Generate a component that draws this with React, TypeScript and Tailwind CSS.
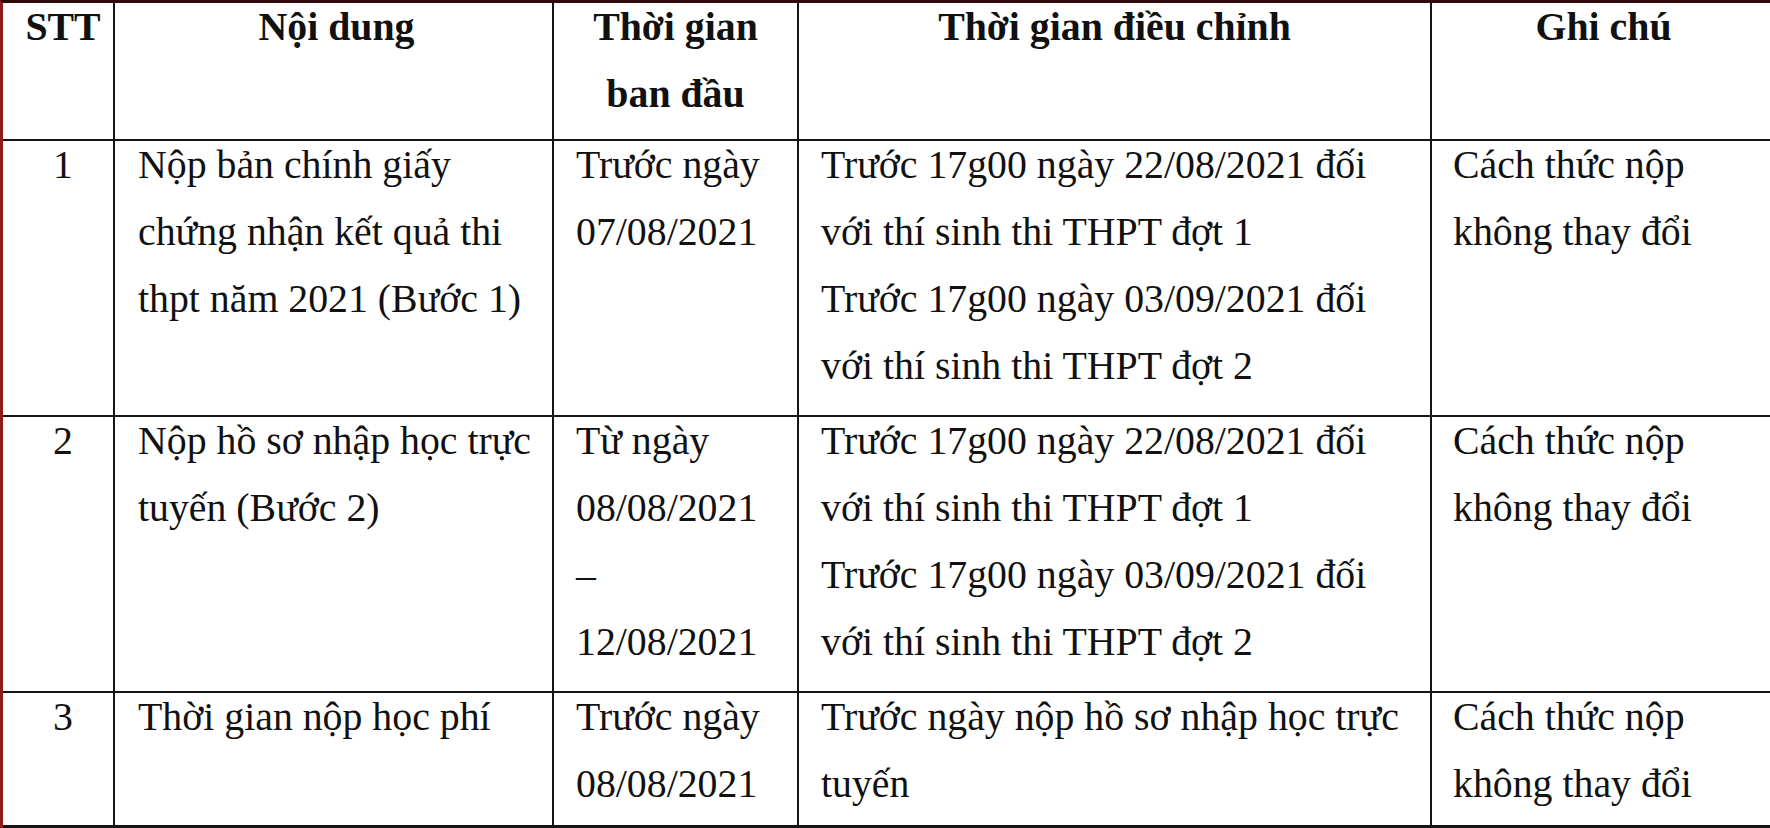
const cols = "grid grid-cols-[110px_439px_245px_633px_345px]";

type Row = {
  stt: string;
  content: string[];
  start: string[];
  adjusted: string[];
  note: string[];
  height: string;
};

const rows: Row[] = [
  {
    stt: "1",
    content: ["Nộp bản chính giấy", "chứng nhận kết quả thi", "thpt năm 2021 (Bước 1)"],
    start: ["Trước ngày", "07/08/2021"],
    adjusted: [
      "Trước 17g00 ngày 22/08/2021 đối",
      "với thí sinh thi THPT đợt 1",
      "Trước 17g00 ngày 03/09/2021 đối",
      "với thí sinh thi THPT đợt 2",
    ],
    note: ["Cách thức nộp", "không thay đổi"],
    height: "h-[276px]",
  },
  {
    stt: "2",
    content: ["Nộp hồ sơ nhập học trực", "tuyến (Bước 2)"],
    start: ["Từ ngày", "08/08/2021", "–", "12/08/2021"],
    adjusted: [
      "Trước 17g00 ngày 22/08/2021 đối",
      "với thí sinh thi THPT đợt 1",
      "Trước 17g00 ngày 03/09/2021 đối",
      "với thí sinh thi THPT đợt 2",
    ],
    note: ["Cách thức nộp", "không thay đổi"],
    height: "h-[276px]",
  },
  {
    stt: "3",
    content: ["Thời gian nộp học phí"],
    start: ["Trước ngày", "08/08/2021"],
    adjusted: ["Trước ngày nộp hồ sơ nhập học trực", "tuyến"],
    note: ["Cách thức nộp", "không thay đổi"],
    height: "h-[137px] border-b-[3px]",
  },
];

// each cell: lines stacked, Word-like double spacing
const Lines = ({ lines }: { lines: string[] }) => (
  <div className="-mt-[9px] leading-[67px]">
    {lines.map((l, i) => (
      <div key={i} className="whitespace-nowrap">
        {l}
      </div>
    ))}
  </div>
);

const App = () => {
  return (
    <div className="w-[1770px] h-[828px] overflow-hidden bg-white">
      <div
        className="w-[1780px] h-[828px] border-t-[3px] border-l-[3px] border-t-[#2e0a0a] border-l-[#8e1b1b] text-[#111] text-[39.8px]"
        style={{ fontFamily: '"Liberation Serif", "Times New Roman", serif' }}
      >
        {/* header */}
        <div className={`${cols} h-[136px] font-bold`}>
          <div className="pl-[10px] text-center">
            <Lines lines={["STT"]} />
          </div>
          <div className="border-l-2 border-[#151515] pl-[6px] text-center">
            <Lines lines={["Nội dung"]} />
          </div>
          <div className="border-l-2 border-[#151515] text-center">
            <Lines lines={["Thời gian", "ban đầu"]} />
          </div>
          <div className="border-l-2 border-[#151515] text-center">
            <Lines lines={["Thời gian điều chỉnh"]} />
          </div>
          <div className="border-l-2 border-[#151515] text-center">
            <Lines lines={["Ghi chú"]} />
          </div>
        </div>

        {rows.map((r) => (
          <div key={r.stt} className={`${cols} ${r.height} border-t-2 border-[#151515]`}>
            <div className="pl-[10px] text-center">
              <Lines lines={[r.stt]} />
            </div>
            <div className="border-l-2 border-[#151515] pl-[23px]">
              <Lines lines={r.content} />
            </div>
            <div className="border-l-2 border-[#151515] pl-[22px]">
              <Lines lines={r.start} />
            </div>
            <div className="border-l-2 border-[#151515] pl-[22px]">
              <Lines lines={r.adjusted} />
            </div>
            <div className="border-l-2 border-[#151515] pl-[21px]">
              <Lines lines={r.note} />
            </div>
          </div>
        ))}
      </div>
    </div>
  );
};

export default App;
